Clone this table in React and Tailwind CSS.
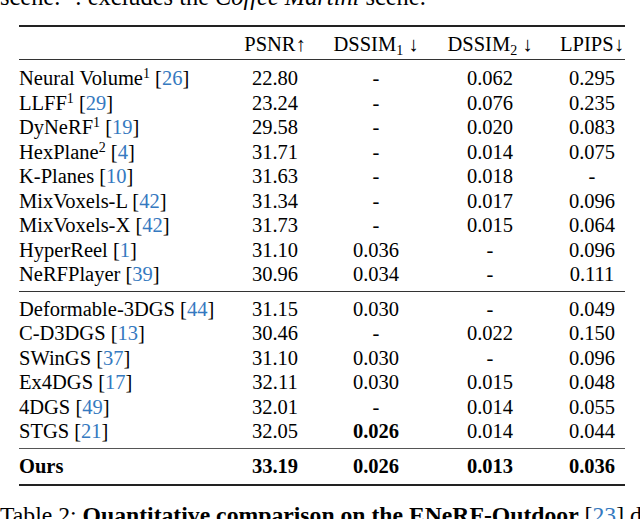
const rows1 = [
  { name: "Neural Volume", sup: "1", cite: "26", v: ["22.80", "-", "0.062", "0.295"] },
  { name: "LLFF", sup: "1", cite: "29", v: ["23.24", "-", "0.076", "0.235"] },
  { name: "DyNeRF", sup: "1", cite: "19", v: ["29.58", "-", "0.020", "0.083"] },
  { name: "HexPlane", sup: "2", cite: "4", v: ["31.71", "-", "0.014", "0.075"] },
  { name: "K-Planes", cite: "10", v: ["31.63", "-", "0.018", "-"] },
  { name: "MixVoxels-L", cite: "42", v: ["31.34", "-", "0.017", "0.096"] },
  { name: "MixVoxels-X", cite: "42", v: ["31.73", "-", "0.015", "0.064"] },
  { name: "HyperReel", cite: "1", v: ["31.10", "0.036", "-", "0.096"] },
  { name: "NeRFPlayer", cite: "39", v: ["30.96", "0.034", "-", "0.111"] },
];

const rows2 = [
  { name: "Deformable-3DGS", cite: "44", v: ["31.15", "0.030", "-", "0.049"] },
  { name: "C-D3DGS", cite: "13", v: ["30.46", "-", "0.022", "0.150"] },
  { name: "SWinGS", cite: "37", v: ["31.10", "0.030", "-", "0.096"] },
  { name: "Ex4DGS", cite: "17", v: ["32.11", "0.030", "0.015", "0.048"] },
  { name: "4DGS", cite: "49", v: ["32.01", "-", "0.014", "0.055"] },
  { name: "STGS", cite: "21", v: ["32.05", "0.026", "0.014", "0.044"], bold: [1] },
];

function Cells({ first, v, bold = [], allBold }) {
  const b = (i) => (allBold || bold.includes(i) ? "font-bold" : "");
  return (
    <div className="flex h-[24.5px] items-center leading-[24.5px]">
      <div className={"w-[211px] whitespace-nowrap " + (allBold ? "font-bold" : "")}>{first}</div>
      <div className={"w-[90px] text-center " + b(0)}>{v[0]}</div>
      <div className={"w-[112px] text-center " + b(1)}>{v[1]}</div>
      <div className={"w-[116px] text-center " + b(2)}>{v[2]}</div>
      <div className={"w-[77px] pl-[11px] text-center " + b(3)}>{v[3]}</div>
    </div>
  );
}

function Method({ r }) {
  return (
    <>
      {r.name}
      {r.sup && <sup className="text-[14px]">{r.sup}</sup>} [
      <span className="text-[#3579c0]">{r.cite}</span>]
    </>
  );
}

export default function App() {
  return (
    <div
      className="h-[519px] w-[640px] overflow-hidden bg-white text-[20.5px] text-black"
      style={{ fontFamily: '"Liberation Serif", "Times New Roman", serif' }}
    >
      <div className="mt-[-17px] h-[28px] whitespace-nowrap text-[24.4px] leading-[28px]">
        scene. <sup className="text-[17px]">2</sup>: excludes the <i>Coffee Martini</i> scene.
      </div>

      <div className="ml-[19px] mt-[14px] w-[606px]">
        <div className="h-[2px] bg-[#222]" />
        <div className="pb-[2px] pt-[5px]">
          <Cells
            first=""
            v={[
              <>PSNR↑</>,
              <>
                DSSIM<sub className="text-[14px]">1</sub> ↓
              </>,
              <>
                DSSIM<sub className="text-[14px]">2</sub> ↓
              </>,
              <>LPIPS↓</>,
            ]}
          />
        </div>
        <div className="h-[1.5px] bg-[#333]" />
        <div className="pb-[4px] pt-[6px]">
          {rows1.map((r) => (
            <Cells key={r.name} first={<Method r={r} />} v={r.v} />
          ))}
        </div>
        <div className="h-[1px] bg-[#333]" />
        <div className="pb-[4px] pt-[5px]">
          {rows2.map((r) => (
            <Cells key={r.name} first={<Method r={r} />} v={r.v} bold={r.bold} />
          ))}
        </div>
        <div className="h-[1.5px] bg-[#555]" />
        <div className="pb-[5px] pt-[5px]">
          <Cells first="Ours" v={["33.19", "0.026", "0.013", "0.036"]} allBold />
        </div>
        <div className="h-[2px] bg-[#222]" />
      </div>

      <div className="mt-[15px] whitespace-nowrap text-[23.7px] leading-[28px]">
        Table 2: <b>Quantitative comparison on the ENeRF-Outdoor</b> [
        <span className="text-[#3579c0]">23</span>] dataset.
      </div>
    </div>
  );
}
